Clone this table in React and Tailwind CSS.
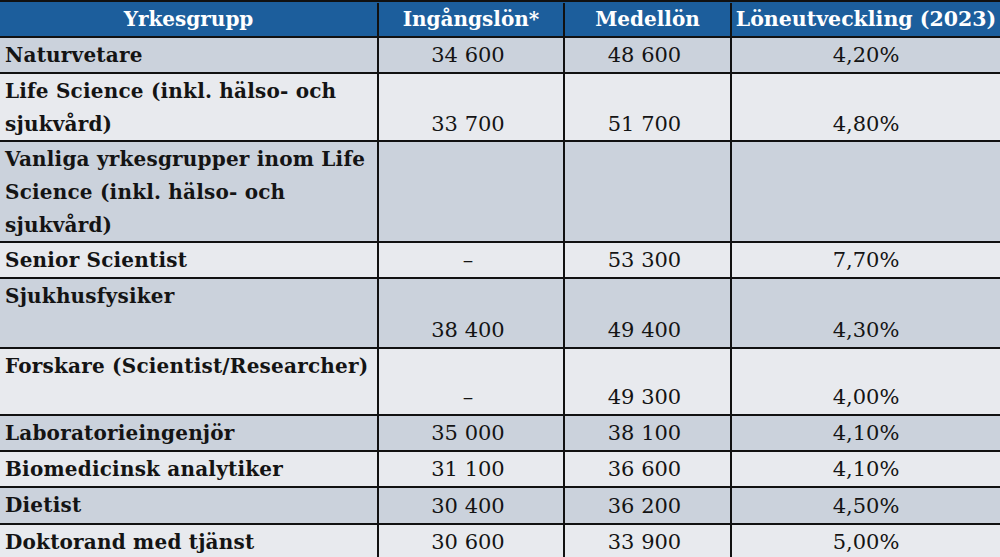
import React from "react";

const rows = [
	{ name: ["Naturvetare"], start: "34 600", avg: "48 600", growth: "4,20%", h: "h-[36px]", dark: true },
	{ name: ["Life Science (inkl. hälso- och", "sjukvård)"], start: "33 700", avg: "51 700", growth: "4,80%", h: "h-[68px]", dark: false },
	{ name: ["Vanliga yrkesgrupper inom Life", "Science (inkl. hälso- och", "sjukvård)"], start: "", avg: "", growth: "", h: "h-[101px]", dark: true },
	{ name: ["Senior Scientist"], start: "–", avg: "53 300", growth: "7,70%", h: "h-[36px]", dark: false },
	{ name: ["Sjukhusfysiker"], start: "38 400", avg: "49 400", growth: "4,30%", h: "h-[70px]", dark: true },
	{ name: ["Forskare (Scientist/Researcher)"], start: "–", avg: "49 300", growth: "4,00%", h: "h-[67px]", dark: false },
	{ name: ["Laboratorieingenjör"], start: "35 000", avg: "38 100", growth: "4,10%", h: "h-[36px]", dark: true },
	{ name: ["Biomedicinsk analytiker"], start: "31 100", avg: "36 600", growth: "4,10%", h: "h-[36px]", dark: false },
	{ name: ["Dietist"], start: "30 400", avg: "36 200", growth: "4,50%", h: "h-[37px]", dark: true },
	{ name: ["Doktorand med tjänst"], start: "30 600", avg: "33 900", growth: "5,00%", h: "h-[36px]", dark: false },
];

const cols = "grid grid-cols-[379px_186px_167px_268px]";

const App = () => {
	return (
		<div className="w-[1000px] h-[557px] overflow-hidden bg-[#e8eaee] text-[#141414] font-['DejaVu_Serif',serif] text-[20px] leading-[33px]">
			<div className="border-t-2 border-[#111]">
				{/* header */}
				<div className={`${cols} h-[36px] border-b-2 border-[#111] bg-[#1c5e9c] text-white font-bold pt-[1px]`}>
					<div className="border-r-2 border-[#111] text-center">Yrkesgrupp</div>
					<div className="border-r-2 border-[#111] text-center">Ingångslön*</div>
					<div className="border-r-2 border-[#111] text-center">Medellön</div>
					<div className="text-center text-[20.5px] whitespace-nowrap">Löneutveckling (2023)</div>
				</div>

				{rows.map((row, i) => (
					<div
						key={i}
						className={`${cols} ${row.h} border-b-2 border-[#111] ${row.dark ? "bg-[#cbd2dc]" : "bg-[#e8eaee]"}`}
					>
						<div className="border-r-2 border-[#111] pl-[5px] pt-[1px] font-bold whitespace-nowrap tracking-[0.2px]">
							{row.name.map((line, j) => (
								<div key={j}>{line}</div>
							))}
						</div>
						<div className="border-r-2 border-[#111] flex items-end justify-center text-[21px] pr-[6px]">{row.start}</div>
						<div className="border-r-2 border-[#111] flex items-end justify-center text-[21px] pr-[6px]">{row.avg}</div>
						<div className="flex items-end justify-center text-[21px]">{row.growth}</div>
					</div>
				))}
			</div>
		</div>
	);
};

export default App;
